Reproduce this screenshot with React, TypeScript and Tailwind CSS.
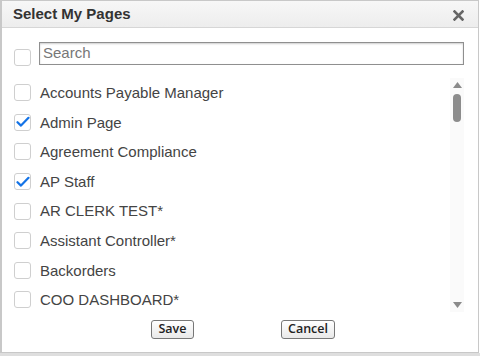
import React from "react";

const items: { label: string; checked: boolean }[] = [
  { label: "Accounts Payable Manager", checked: false },
  { label: "Admin Page", checked: true },
  { label: "Agreement Compliance", checked: false },
  { label: "AP Staff", checked: true },
  { label: "AR CLERK TEST*", checked: false },
  { label: "Assistant Controller*", checked: false },
  { label: "Backorders", checked: false },
  { label: "COO DASHBOARD*", checked: false },
];

function Box({ checked }: { checked: boolean }) {
  return (
    <div className="w-[17px] h-[17px] shrink-0 rounded-[3px] border border-[#cfcfcf] bg-white flex items-center justify-center">
      {checked && (
        <svg width="14" height="12" viewBox="0 0 14 12">
          <path d="M1.5 6.2 L5 9.6 L12.5 1.8" fill="none" stroke="#1473e6" strokeWidth="2.2" strokeLinecap="round" strokeLinejoin="round" />
        </svg>
      )}
    </div>
  );
}

export default function App() {
  return (
    <div className="w-[480px] h-[356px] bg-white overflow-hidden" style={{ fontFamily: '"Liberation Sans", Arial, sans-serif' }}>
      <div className="w-[479px] h-[353px] border border-[#c8c8c8] border-l-2 flex flex-col bg-white">
        <div className="h-[27px] shrink-0 bg-gradient-to-b from-[#f7f7f7] to-[#ededed] border-b border-[#d6d6d6] flex items-center justify-between pl-[11px] pr-[14px]">
          <span className="text-[15px] font-bold text-[#333]">Select My Pages</span>
          <svg width="11" height="11" viewBox="0 0 11 11" className="mt-[2px]">
            <path d="M1.5 1.5 L9.5 9.5 M9.5 1.5 L1.5 9.5" stroke="#666" strokeWidth="2.6" strokeLinecap="square" />
          </svg>
        </div>
        <div className="flex items-start pl-[12px] pt-[14px] pr-[14px]">
          <div className="mt-[7px]"><Box checked={false} /></div>
          <div className="ml-[8px] flex-1 h-[23px] border border-[#8f8f8f] shadow-[inset_0_1px_2px_rgba(0,0,0,0.2)] flex items-center px-[3px] text-[15px] text-[#777]">
            Search
          </div>
        </div>
        <div className="flex mt-[12px] h-[234px]">
          <div className="flex-1 pl-[12px]">
            {items.map((it) => (
              <div key={it.label} className="h-[29.6px] flex items-center">
                <Box checked={it.checked} />
                <span className="ml-[9px] text-[15px] text-[#444] pt-[1px]">{it.label}</span>
              </div>
            ))}
          </div>
          <div className="w-[14px] mr-[14px] bg-[#fafafa] flex flex-col items-center pt-[4px] pb-[4px]">
            <svg width="9" height="6" viewBox="0 0 9 6"><path d="M0 6 L4.5 0 L9 6 Z" fill="#8a8a8a" /></svg>
            <div className="mt-[6px] w-[8px] h-[28px] rounded-full bg-[#8c8c8c]" />
            <div className="flex-1" />
            <svg width="9" height="6" viewBox="0 0 9 6"><path d="M0 0 L4.5 6 L9 0 Z" fill="#8a8a8a" /></svg>
          </div>
        </div>
        <div className="flex mt-[8px] pl-[149px]">
          <div className="w-[43px] h-[19px] rounded-[3px] border border-[#777] bg-gradient-to-b from-white to-[#e9e9e9] flex items-center justify-center text-[12.5px] font-semibold text-[#222]" style={{ fontFamily: '"Open Sans", "Liberation Sans", sans-serif' }}>
            Save
          </div>
          <div className="ml-[87px] w-[54px] h-[19px] rounded-[3px] border border-[#777] bg-gradient-to-b from-white to-[#e9e9e9] flex items-center justify-center text-[12.5px] font-semibold text-[#222]" style={{ fontFamily: '"Open Sans", "Liberation Sans", sans-serif' }}>
            Cancel
          </div>
        </div>
      </div>
      <div className="h-[3px] bg-[#dedede]" />
    </div>
  );
}
